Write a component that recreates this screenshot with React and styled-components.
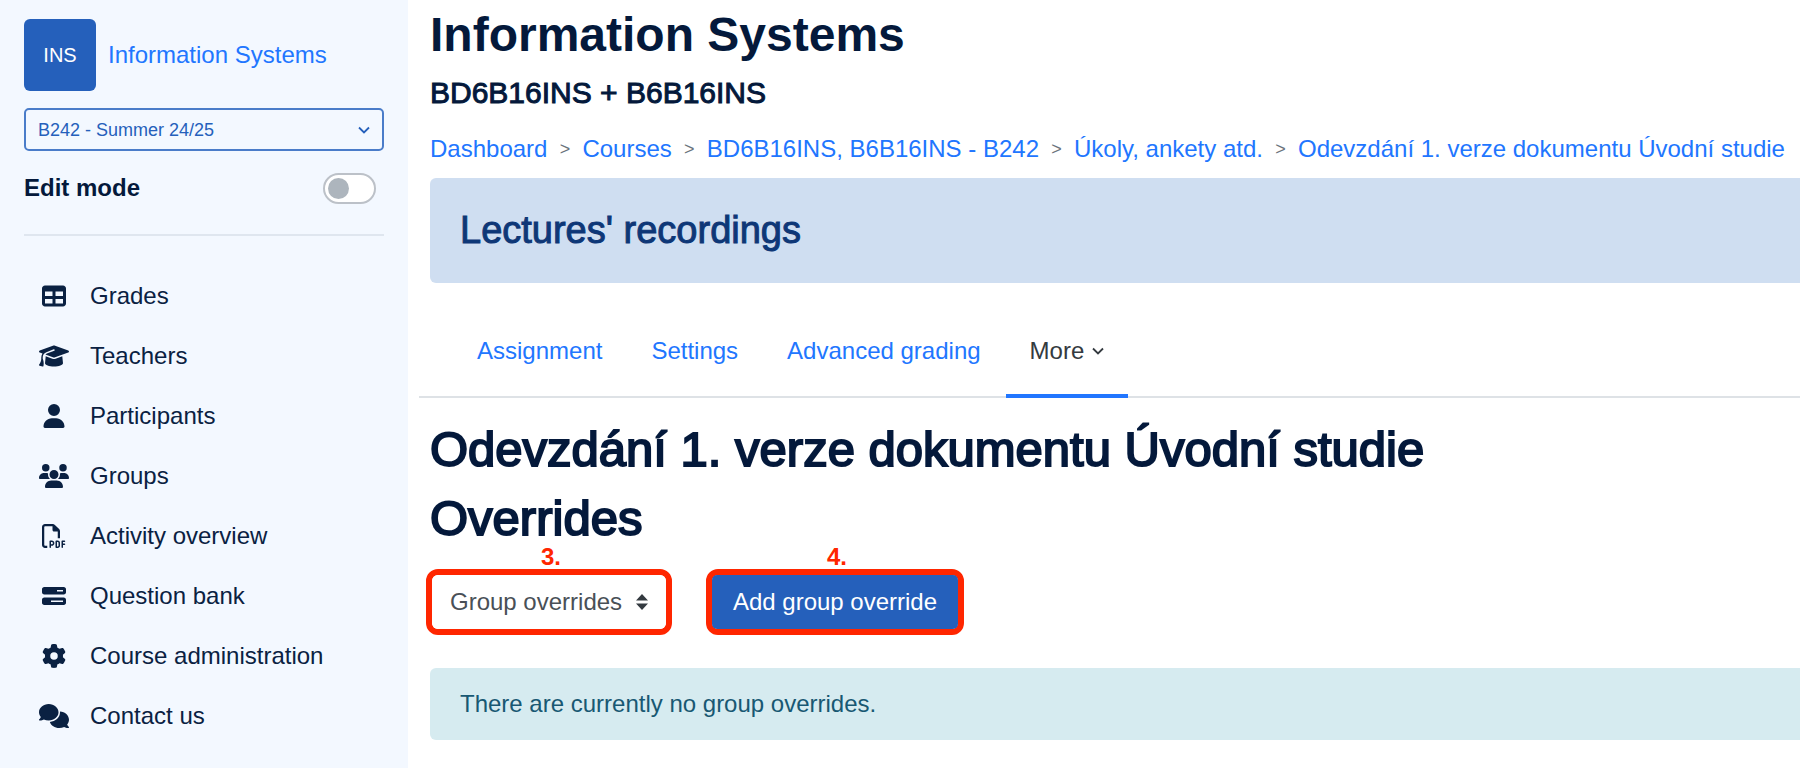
import styled, { createGlobalStyle } from "styled-components";
import {
  FaTable,
  FaGraduationCap,
  FaUser,
  FaUsers,
  FaRegFilePdf,
  FaBarsProgress,
  FaGear,
  FaComments,
} from "react-icons/fa6";

const GlobalStyle = createGlobalStyle`
  * {
    box-sizing: border-box;
  }
  body {
    margin: 0;
    background: #ffffff;
    color: #04193b;
    font-family: "Liberation Sans", Arial, sans-serif;
    font-size: 24px;
    line-height: 36px;
  }
  a {
    color: #2176ff;
    text-decoration: none;
  }
  button, select {
    font: inherit;
  }
`;

const Page = styled.div`
  display: flex;
  min-height: 100vh;
`;

const Sidebar = styled.aside`
  flex: 0 0 408px;
  padding: 19px 24px 0;
  background: #f3f8ff;
`;

const CourseLink = styled.a`
  display: flex;
  align-items: center;
  gap: 12px;
  margin-bottom: 17px;
`;

const Avatar = styled.span`
  display: flex;
  align-items: center;
  justify-content: center;
  width: 72px;
  height: 72px;
  border-radius: 6px;
  background: #2560bb;
  color: #ffffff;
  font-size: 20px;
`;

const SelectWrap = styled.div`
  position: relative;
  display: flex;
`;

const SemesterSelect = styled.select`
  appearance: none;
  width: 100%;
  height: 43px;
  padding: 0 12px;
  border: 2px solid #4a7cc9;
  border-radius: 5px;
  background: #f3f8ff;
  color: #2560bb;
  font-size: 18px;
`;

const SelectIcon = styled.svg`
  position: absolute;
  top: 50%;
  right: ${(props) => props.$right}px;
  width: 12px;
  height: ${(props) => props.$height}px;
  transform: translateY(-50%);
  pointer-events: none;
`;

const EditMode = styled.label`
  display: flex;
  align-items: center;
  justify-content: space-between;
  margin: 19px 0 28px;
  padding-right: 8px;
  font-weight: 700;
`;

const Toggle = styled.input`
  appearance: none;
  display: flex;
  align-items: center;
  width: 53px;
  height: 31px;
  margin: 0;
  padding: 0 3px;
  border: 2px solid #bcc1c8;
  border-radius: 16px;
  background: #ffffff;
  &::before {
    content: "";
    width: 21px;
    height: 21px;
    border-radius: 50%;
    background: #adb5bd;
  }
  &:checked {
    justify-content: flex-end;
  }
`;

const Divider = styled.hr`
  height: 2px;
  margin: 0 0 30px;
  border: 0;
  background: #dfe6ef;
`;

const NavItem = styled.a`
  display: flex;
  align-items: center;
  gap: 21px;
  height: 60px;
  padding-left: 15px;
  color: #0a2142;
  svg {
    width: 30px;
    height: 24px;
  }
`;

const Main = styled.main`
  flex: 1;
  min-width: 0;
  padding: 6px 0 0 22px;
`;

const Title = styled.h1`
  margin: 0 0 11px;
  font-size: 48px;
  line-height: 58px;
  color: #04193b;
`;

/* medium weight: regular glyphs thickened by a thin stroke */
const Heading = styled.h2`
  margin: 0 0 11px;
  font-size: 49px;
  font-weight: 400;
  line-height: 58px;
  color: #04193b;
  -webkit-text-stroke: 2px currentColor;
`;

const Subtitle = styled.p`
  margin: 0 0 20px;
  font-size: 30px;
  -webkit-text-stroke: 1px currentColor;
`;

const Breadcrumb = styled.nav`
  display: flex;
  margin-bottom: 11px;
  white-space: nowrap;
`;

const Separator = styled.span`
  width: 35px;
  font-size: 18px;
  text-align: center;
  color: #6a737b;
`;

const Recordings = styled.section`
  padding: 30px;
  border-radius: 6px 0 0 6px;
  background: #cfdef1;
`;

const RecordingsTitle = styled(Heading)`
  margin: 0;
  font-size: 38px;
  line-height: 45px;
  color: #0e3777;
  -webkit-text-stroke: 1px currentColor;
`;

const Tabs = styled.nav`
  display: flex;
  gap: 1px;
  margin: 33px 0 22px -11px;
  padding-left: 34px;
  border-bottom: 2px solid #dee2e6;
`;

const Tab = styled.a`
  display: flex;
  align-items: center;
  gap: 8px;
  height: 82px;
  margin-bottom: -2px;
  padding: 19px 24px 27px;
  border-bottom: 4px solid ${(props) => (props.$active ? "#2176ff" : "transparent")};
  color: ${(props) => (props.$active ? "#343a40" : "#2176ff")};
  svg {
    width: 12px;
    height: 8px;
  }
`;

const Controls = styled.div`
  display: flex;
  gap: 34px;
  margin: 22px 0 33px -4px;
`;

const Marked = styled.div`
  position: relative;
  border: 6px solid #ff2600;
  border-radius: 12px;
`;

const Step = styled.span`
  position: absolute;
  top: -32px;
  left: 0;
  right: 0;
  padding-left: 4px;
  line-height: 28px;
  text-align: center;
  font-weight: 700;
  color: #ff2600;
`;

const OverrideSelect = styled.select`
  appearance: none;
  width: 234px;
  height: 54px;
  padding: 0 18px;
  border: 0;
  border-radius: 6px;
  background: #ffffff;
  color: #495057;
`;

const AddButton = styled.button`
  display: block;
  width: 246px;
  height: 54px;
  padding: 0;
  border: 0;
  border-radius: 5px;
  background: #2560bb;
  color: #ffffff;
`;

const Notice = styled.div`
  padding: 18px 30px;
  border-radius: 6px 0 0 6px;
  background: #d6ebf0;
  color: #185873;
`;

const navItems = [
  { label: "Grades", Icon: FaTable },
  { label: "Teachers", Icon: FaGraduationCap },
  { label: "Participants", Icon: FaUser },
  { label: "Groups", Icon: FaUsers },
  { label: "Activity overview", Icon: FaRegFilePdf },
  { label: "Question bank", Icon: FaBarsProgress },
  { label: "Course administration", Icon: FaGear },
  { label: "Contact us", Icon: FaComments },
];

const crumbs = [
  "Dashboard",
  "Courses",
  "BD6B16INS, B6B16INS - B242",
  "Úkoly, ankety atd.",
  "Odevzdání 1. verze dokumentu Úvodní studie",
];

const Chevron = () => (
  <path d="M1 1.5 L6 6.5 L11 1.5" fill="none" stroke="currentColor" strokeWidth="1.8" />
);

const CourseSidebar = () => (
  <Sidebar>
    <CourseLink href="#course">
      <Avatar>INS</Avatar>
      Information Systems
    </CourseLink>
    <SelectWrap>
      <SemesterSelect aria-label="Semester">
        <option>B242 - Summer 24/25</option>
      </SemesterSelect>
      <SelectIcon $right={14} $height={8} viewBox="0 0 12 8" color="#2560bb">
        <Chevron />
      </SelectIcon>
    </SelectWrap>
    <EditMode>
      Edit mode
      <Toggle type="checkbox" />
    </EditMode>
    <Divider />
    <nav>
      {navItems.map(({ label, Icon }) => (
        <NavItem href="#nav" key={label}>
          <Icon />
          {label}
        </NavItem>
      ))}
    </nav>
  </Sidebar>
);

const App = () => {
  return (
    <Page>
      <GlobalStyle />
      <CourseSidebar />
      <Main>
        <Title>Information Systems</Title>
        <Subtitle>BD6B16INS + B6B16INS</Subtitle>
        <Breadcrumb>
          {crumbs.map((crumb, i) => [
            i > 0 && <Separator key={i}>&gt;</Separator>,
            <a href="#crumb" key={crumb}>
              {crumb}
            </a>,
          ])}
        </Breadcrumb>
        <Recordings>
          <RecordingsTitle>Lectures' recordings</RecordingsTitle>
        </Recordings>
        <Tabs>
          <Tab href="#assignment">Assignment</Tab>
          <Tab href="#settings">Settings</Tab>
          <Tab href="#grading">Advanced grading</Tab>
          <Tab href="#more" $active>
            More
            <svg viewBox="0 0 12 8">
              <Chevron />
            </svg>
          </Tab>
        </Tabs>
        <Heading>Odevzdání 1. verze dokumentu Úvodní studie</Heading>
        <Heading as="h3">Overrides</Heading>
        <Controls>
          <Marked>
            <Step>3.</Step>
            <OverrideSelect aria-label="Override type">
              <option>Group overrides</option>
            </OverrideSelect>
            <SelectIcon $right={18} $height={16} viewBox="0 0 12 16" color="#343a40">
              <path d="M6 0 L12 6.5 H0 Z M0 9.5 H12 L6 16 Z" fill="currentColor" />
            </SelectIcon>
          </Marked>
          <Marked>
            <Step>4.</Step>
            <AddButton>Add group override</AddButton>
          </Marked>
        </Controls>
        <Notice>There are currently no group overrides.</Notice>
      </Main>
    </Page>
  );
};

export default App;
